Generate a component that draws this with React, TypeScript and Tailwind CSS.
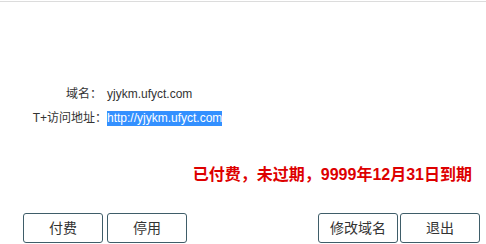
const font = "font-['Liberation_Sans','Noto_Sans_CJK_SC',sans-serif]";

function Btn({ label }: { label: string }) {
  return (
    <button className="flex h-[30px] w-[80px] items-center justify-center rounded-[3px] border border-[#3f5d69] bg-white text-[14px] text-[#333]">
      {label}
    </button>
  );
}

export default function App() {
  return (
    <div className={`flex h-[244px] w-[486px] flex-col bg-white ${font}`}>
      <div className="mt-px h-px w-full bg-[#dcdcdc]" />

      <div className="mt-[80px] grid grid-cols-[107px_1fr] text-[12px] text-[#333]">
        <div className="flex h-6 items-center justify-end pr-[5px]">域名：</div>
        <div className="flex h-6 items-center">yjykm.ufyct.com</div>
        <div className="flex h-6 items-center justify-end">T+访问地址：</div>
        <div className="flex h-6 items-center">
          <span className="bg-[#3390ff] leading-[15px] text-white">http://yjykm.ufyct.com</span>
        </div>
      </div>

      <div className="mt-[33px] flex h-6 items-center justify-end pr-[14px] text-[16px] font-bold text-[#dd0000]">
        已付费，未过期，9999年12月31日到期
      </div>

      <div className="mt-[26px] flex items-center justify-between pl-[23px] pr-[6px]">
        <div className="flex gap-[4px]">
          <Btn label="付费" />
          <Btn label="停用" />
        </div>
        <div className="flex gap-[2px]">
          <Btn label="修改域名" />
          <Btn label="退出" />
        </div>
      </div>
    </div>
  );
}
